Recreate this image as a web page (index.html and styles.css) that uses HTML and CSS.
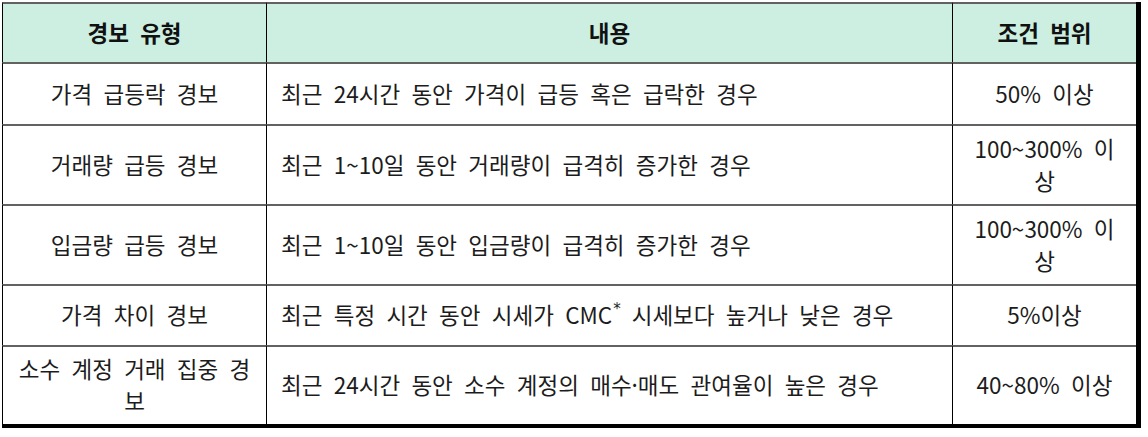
FILE: index.html
```html
<!DOCTYPE html>
<html lang="ko">
<head>
<meta charset="utf-8">
<link rel="stylesheet" href="styles.css">
</head>
<body>
<div class="alert-table">
  <div class="cell head c1">경보 유형</div>
  <div class="cell head c2">내용</div>
  <div class="cell head c3">조건 범위</div>

  <div class="cell c1">가격 급등락 경보</div>
  <div class="cell c2">최근 24시간 동안 가격이 급등 혹은 급락한 경우</div>
  <div class="cell c3">50% 이상</div>

  <div class="cell c1">거래량 급등 경보</div>
  <div class="cell c2">최근 1~10일 동안 거래량이 급격히 증가한 경우</div>
  <div class="cell c3">100~300% 이상</div>

  <div class="cell c1">입금량 급등 경보</div>
  <div class="cell c2">최근 1~10일 동안 입금량이 급격히 증가한 경우</div>
  <div class="cell c3">100~300% 이상</div>

  <div class="cell c1">가격 차이 경보</div>
  <div class="cell c2"><span>최근 특정 시간 동안 시세가 CMC<sup class="star">*</sup>시세보다 높거나 낮은 경우</span></div>
  <div class="cell c3">5%이상</div>

  <div class="cell c1">소수 계정 거래 집중 경보</div>
  <div class="cell c2">최근 24시간 동안 소수 계정의 매수·매도 관여율이 높은 경우</div>
  <div class="cell c3">40~80% 이상</div>
</div>
</body>
</html>
```

FILE: styles.css
```css
html, body {
  margin: 0;
  padding: 0;
  background: #ffffff;
}

body {
  padding: 2px 0 0 2px;
  font-family: "Noto Sans CJK KR", "Noto Sans", sans-serif;
  font-size: 22.5px;
  word-spacing: 5px;
  color: #1c1c1c;
}

.alert-table {
  display: grid;
  grid-template-columns: 264px 686px 184px;
  grid-template-rows: 60px 62px 80px 80px 61px 79px;
  width: 1134px;
  border-right: 5px solid #000;
  border-bottom: 4px solid #000;
  box-shadow: 0 2px 0 #bdbdbd;
}

.cell {
  box-sizing: border-box;
  border-top: 2px solid #626262;
  border-left: 1px solid #000;
  display: flex;
  align-items: center;
  line-height: 32px;
  padding: 0 14px 3px;
}

.c1, .c3 {
  justify-content: center;
  text-align: center;
}

.c2 {
  justify-content: flex-start;
  text-align: left;
}

.head {
  background: #ccefe1;
  font-weight: bold;
  color: #111;
  justify-content: center;
  text-align: center;
}

.star {
  font-family: "DejaVu Sans", sans-serif;
  font-size: 15px;
  line-height: 0;
  vertical-align: 10px;
  margin-left: 1px;
  margin-right: 11px;
}
```
